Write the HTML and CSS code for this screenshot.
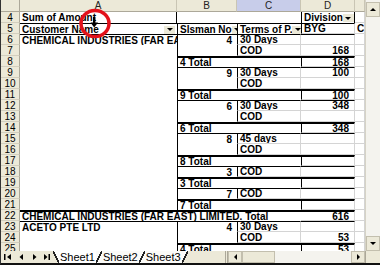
FILE: index.html
```html
<!DOCTYPE html>
<html lang="en">
<head>
    <meta charset="UTF-8">
    <title>Pivot table</title>
    <link rel="stylesheet" href="styles.css">
</head>
<body>
<div class="window">
    <div class="main">
        <div class="sheet">
            <div class="corner"></div><div class="ch">A</div><div class="ch">B</div><div class="ch sel">C</div><div class="ch">D</div><div class="ch"></div>

            <div class="rh">4</div><div class="r">Sum of Amount</div><div></div><div></div><div class="l r">Division<span class="dd"></span></div><div class="g"></div>
            <div class="rh">5</div><div class="t">Customer Name<span class="dd"></span></div><div class="t l">Slsman No<span class="dd"></span></div><div class="t l">Terms of P.<span class="dd"></span></div><div class="t l g">BYG</div><div class="g">CO</div>
            <div class="rh">6</div><div class="t">CHEMICAL INDUSTRIES (FAR EAST) LIMITED</div><div class="t l n">4</div><div class="t l g">30 Days</div><div class="t g"></div><div class="g"></div>
            <div class="rh">7</div><div></div><div class="l"></div><div class="l g">COD</div><div class="g n">168</div><div class="g"></div>
            <div class="rh">8</div><div></div><div class="s2 l tt">4 Total</div><div class="tt l g n">168</div><div class="g"></div>
            <div class="rh">9</div><div></div><div class="t l n">9</div><div class="t l g">30 Days</div><div class="t g n">100</div><div class="g"></div>
            <div class="rh">10</div><div></div><div class="l"></div><div class="l g">COD</div><div class="g"></div><div class="g"></div>
            <div class="rh">11</div><div></div><div class="s2 l tt">9 Total</div><div class="tt l g n">100</div><div class="g"></div>
            <div class="rh">12</div><div></div><div class="t l n">6</div><div class="t l g">30 Days</div><div class="t g n">348</div><div class="g"></div>
            <div class="rh">13</div><div></div><div class="l"></div><div class="l g">COD</div><div class="g"></div><div class="g"></div>
            <div class="rh">14</div><div></div><div class="s2 l tt">6 Total</div><div class="tt l g n">348</div><div class="g"></div>
            <div class="rh">15</div><div></div><div class="t l n">8</div><div class="t l g">45 days</div><div class="t g"></div><div class="g"></div>
            <div class="rh">16</div><div></div><div class="l"></div><div class="l g">COD</div><div class="g"></div><div class="g"></div>
            <div class="rh">17</div><div></div><div class="s2 l tt">8 Total</div><div class="tt l g"></div><div class="g"></div>
            <div class="rh">18</div><div></div><div class="t l n">3</div><div class="t l g">COD</div><div class="t g"></div><div class="g"></div>
            <div class="rh">19</div><div></div><div class="s2 l tt">3 Total</div><div class="tt l g"></div><div class="g"></div>
            <div class="rh">20</div><div></div><div class="t l n">7</div><div class="t l g">COD</div><div class="t g"></div><div class="g"></div>
            <div class="rh">21</div><div></div><div class="s2 l tt">7 Total</div><div class="tt l g"></div><div class="g"></div>
            <div class="rh">22</div><div class="s3 tt">CHEMICAL INDUSTRIES (FAR EAST) LIMITED. Total</div><div class="tt g n">616</div><div class="g"></div>
            <div class="rh">23</div><div class="t">ACETO PTE LTD</div><div class="t l n">4</div><div class="t l g">30 Days</div><div class="t g"></div><div class="g"></div>
            <div class="rh">24</div><div></div><div class="l"></div><div class="l g">COD</div><div class="g n">53</div><div class="g"></div>
            <div class="rh">25</div><div></div><div class="s2 l tt">4 Total</div><div class="tt l g n">53</div><div class="g"></div>
        </div>
        <div class="vscroll">
            <div class="btn up"><span class="tri-up"></span></div>
            <div class="track"></div>
            <div class="btn"><span class="tri-down"></span></div>
        </div>
    </div>
    <div class="bottombar">
        <svg class="nav" width="52" height="12" viewBox="0 0 52 12">
            <rect x="3" y="3" width="1.5" height="6" fill="#000"/>
            <polygon points="10,3 6,6 10,9" fill="#000"/>
            <polygon points="22,3 18.5,6 22,9" fill="#000"/>
            <polygon points="32,3 35.5,6 32,9" fill="#000"/>
            <polygon points="43,3 46.5,6 43,9" fill="#000"/>
            <rect x="47.5" y="3" width="1.5" height="6" fill="#000"/>
        </svg>
        <div class="tabs">
            <i class="bs"></i><span class="tab on">Sheet1</span><i class="fs"></i><span class="tab">Sheet2</span><i class="fs"></i><span class="tab">Sheet3</span><i class="fs last"></i>
        </div>
        <div class="spacer"></div>
        <div class="hscroll">
            <div class="split"></div>
            <div class="hbtn"><span class="tri-left"></span></div>
            <div class="thumb"></div>
            <div class="htrack"></div>
            <div class="hbtn"><span class="tri-right"></span></div>
        </div>
        <div class="sizer"></div>
    </div>
    <svg class="marker" width="36" height="34" viewBox="0 0 36 34">
        <ellipse cx="17" cy="16.5" rx="14" ry="13" fill="none" stroke="#e3121b" stroke-width="3.5"/>
        <rect x="15" y="10" width="2.4" height="6" fill="#000"/>
        <polygon points="12.5,15.5 20,15.5 16.2,20.5" fill="#000"/>
    </svg>
</div>
</body>
</html>
```

FILE: styles.css
```css
* { box-sizing: border-box; }
body { margin: 0; background: #fff; font-family: "Liberation Sans Narrow", "Liberation Sans", Arial, sans-serif; font-size: 10px; color: #000; }
.window { position: relative; width: 380px; height: 265px; border-left: 1px solid #333; border-bottom: 2px solid #111; overflow: hidden; background: #fff; }
.main { display: flex; height: 251px; overflow: hidden; }

/* grid of cells */
.sheet { display: grid; grid-template-columns: 19px 157px 60px 64px 54px 10px; grid-template-rows: 12px; grid-auto-rows: 11px; width: 364px; flex: none; }
.sheet > div { display: flex; align-items: center; white-space: nowrap; overflow: hidden; font-weight: bold; padding: 1px 2px 0 2px; line-height: 10px; }
.corner { background: #ece9d8; border-right: 1px solid #aca899; border-bottom: 1px solid #aca899; }
.sheet > .ch { justify-content: center; font-weight: normal; background: #ece9d8; border-right: 1px solid #c9c5b4; border-bottom: 1px solid #aca899; color: #222; }
.sheet > .ch.sel { background: #c8cdea; }
.sheet > .rh { justify-content: center; font-weight: normal; background: #ece9d8; border-right: 1px solid #aca899; border-bottom: 1px solid #d3cfbf; padding: 1px 0 0 0; }

.g { border-right: 1px solid #d4d4d4; border-bottom: 1px solid #d4d4d4; }
.t { border-top: 1px solid #000; }
.tt { border-top: 2px solid #000; }
.l { border-left: 1px solid #000; }
.r { border-right: 1px solid #000; }
.sheet > .n { justify-content: flex-end; padding-right: 5px; }
.s2 { grid-column: span 2; }
.s3 { grid-column: span 3; }

.dd { margin-left: auto; flex: none; width: 11px; height: 8px; background: #ece9d8; display: flex; align-items: center; justify-content: center; }
.dd::after { content: ""; border-left: 3px solid transparent; border-right: 3px solid transparent; border-top: 3px solid #000; }

/* scroll bars */
.vscroll { width: 15px; flex: none; display: flex; flex-direction: column; background: #f4f3ee; border-left: 1px solid #d6d3c6; padding-top: 2px; }
.btn { height: 15px; flex: none; background: #ece9d8; border: 1px solid #c3bfae; display: flex; align-items: center; justify-content: center; }
.track { flex: 1; }
.tri-up { border-left: 3px solid transparent; border-right: 3px solid transparent; border-bottom: 3px solid #000; }
.tri-down { border-left: 3px solid transparent; border-right: 3px solid transparent; border-top: 3px solid #000; }
.tri-left { border-top: 3px solid transparent; border-bottom: 3px solid transparent; border-right: 3px solid #000; }
.tri-right { border-top: 3px solid transparent; border-bottom: 3px solid transparent; border-left: 3px solid #000; }

.bottombar { display: flex; height: 12px; background: #ece9d8; align-items: stretch; }
.nav { flex: none; }
.tabs { display: flex; font-family: "Liberation Sans", Arial, sans-serif; font-size: 11px; line-height: 12px; }
.tab { background: #fbfbf8; padding: 0 1px; }
.tab.on { background: #fff; }
.tabs i { width: 6px; flex: none; }
.bs { background: linear-gradient(to top right, #ece9d8 calc(50% - 0.7px), #222 calc(50% - 0.7px) calc(50% + 0.7px), #fff 0); }
.fs { background: linear-gradient(to bottom right, #fbfbf8 calc(50% - 0.7px), #222 calc(50% - 0.7px) calc(50% + 0.7px), #fbfbf8 0); }
.fs.last { background: linear-gradient(to bottom right, #fbfbf8 calc(50% - 0.7px), #222 calc(50% - 0.7px) calc(50% + 0.7px), #ece9d8 0); }
.spacer { flex: 1; }
.hscroll { display: flex; width: 140px; flex: none; background: #f4f3ee; }
.split { width: 3px; border-left: 1px solid #aca899; border-right: 1px solid #aca899; background: #ece9d8; }
.hbtn { width: 14px; background: #ece9d8; border: 1px solid #c3bfae; display: flex; align-items: center; justify-content: center; }
.thumb { width: 33px; background: #ece9d8; border: 1px solid #c3bfae; }
.htrack { flex: 1; }
.sizer { width: 15px; flex: none; background: #ece9d8; border-left: 1px solid #aca899; }

/* highlight drawn over the sheet */
.marker { position: absolute; left: 77px; top: 7px; }
```
